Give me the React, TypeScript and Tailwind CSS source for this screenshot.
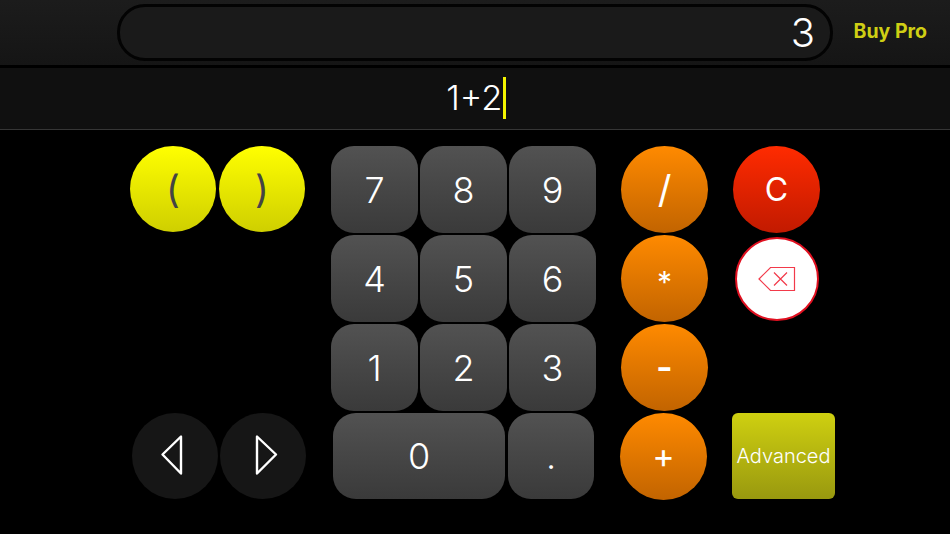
import React from "react";

const FONT = "font-['Inter','Liberation_Sans',sans-serif]";
const DIGIT = "flex items-center justify-center rounded-[23px] bg-gradient-to-b from-[#525252] to-[#3a3a3a] text-[36px] font-light text-white";
const ROUND = "flex items-center justify-center rounded-full";
const ORANGE = "h-[87px] w-[87px] bg-gradient-to-b from-[#ff8a00] to-[#c26400] text-white";
const YELLOW = "h-[86px] w-[86px] bg-gradient-to-b from-[#ffff00] to-[#cfcf00] text-[#444] text-[38px] font-normal";
const DARK = "h-[86px] w-[86px] bg-[#161616]";

function Triangle({ points }: { points: string }) {
    return (
        <svg width="40" height="44" viewBox="0 0 40 44" fill="none">
            <polygon points={points} stroke="#fff" strokeWidth="2.4" strokeLinejoin="round" />
        </svg>
    );
}

export default function App() {
    return (
        <div className={`${FONT} flex h-[534px] w-[950px] flex-col overflow-hidden bg-black`}>
            {/* top bar */}
            <div className="flex h-[65px] items-center bg-gradient-to-b from-[#1c1c1c] to-[#151515] pl-[117px] pr-[23px]">
                <div className="flex h-[57px] w-[716px] items-center justify-end rounded-[28px] border-[3px] border-[#030303] bg-[#1a1a1a] pr-[15px] text-[40px] font-light text-white">
                    3
                </div>
                <div className="ml-auto pb-[2px] text-[19.5px] font-bold text-[#cfcf14]">Buy Pro</div>
            </div>

            {/* input */}
            <div className="mt-[3px] flex h-[62px] items-center justify-center border-b border-[#363636] bg-[#101010] pl-[2px] text-[34.5px] font-light text-white">
                <span className="pb-[2px]">1+2</span>
                <span className="ml-[1px] mb-[2px] h-[42px] w-[2.5px] bg-[#f4f400]" />
            </div>

            {/* keypad */}
            <div className="mt-[16px] flex pl-[130px]">
                <div className="flex h-[353px] w-[201px] flex-col justify-between">
                    <div className="flex gap-[3px]">
                        <div className={`${ROUND} ${YELLOW}`}>(</div>
                        <div className={`${ROUND} ${YELLOW}`}>)</div>
                    </div>
                    <div className="ml-[2px] flex gap-[2px]">
                        <div className={`${ROUND} ${DARK}`}>
                            <Triangle points="7.5,20.5 26,2.5 26,39.5" />
                        </div>
                        <div className={`${ROUND} ${DARK}`}>
                            <Triangle points="14,2.5 14,39.5 33,20.5" />
                        </div>
                    </div>
                </div>

                <div className="flex w-[290px] flex-col gap-[2px]">
                    <div className="grid w-[265px] grid-cols-3 gap-[2px]">
                        {["7", "8", "9", "4", "5", "6", "1", "2", "3"].map((n) => (
                            <div key={n} className={`${DIGIT} h-[87px]`}>{n}</div>
                        ))}
                    </div>
                    <div className="ml-[2px] flex w-[261px] gap-[3px]">
                        <div className={`${DIGIT} h-[86px] flex-1`}>0</div>
                        <div className={`${DIGIT} h-[86px] w-[86px]`}>.</div>
                    </div>
                </div>

                <div className="flex w-[112px] flex-col gap-[2px]">
                    <div className={`${ROUND} ${ORANGE} text-[38px] font-normal`}>/</div>
                    <div className={`${ROUND} ${ORANGE} pt-[8px] text-[30px]`}>*</div>
                    <div className={`${ROUND} ${ORANGE} pb-[2px] text-[36px] font-semibold`}>-</div>
                    <div className={`${ROUND} ${ORANGE} -ml-px pb-[3px] text-[34px]`}>+</div>
                </div>

                <div className="flex h-[353px] flex-col justify-between">
                    <div className="flex flex-col gap-[4px]">
                        <div className={`${ROUND} h-[87px] w-[87px] bg-gradient-to-b from-[#ff2b00] to-[#c21a00] text-[32px] text-white`}>C</div>
                        <div className="ml-[2px] flex h-[84px] w-[84px] items-center justify-center rounded-full border-2 border-[#e01020] bg-white">
                            <svg width="38" height="26" viewBox="0 0 38 26" fill="none" stroke="#f23a4a" strokeWidth="1.2">
                                <polygon points="1,13 12.5,1.5 36.5,1.5 36.5,24.5 12.5,24.5" />
                                <path d="M16 6.5 L29 19.5 M29 6.5 L16 19.5" />
                            </svg>
                        </div>
                    </div>
                    <div className="-ml-px flex h-[86px] w-[103px] items-center justify-center rounded-[6px] bg-gradient-to-b from-[#cfd010] to-[#99990f] text-[20px] font-light text-white">
                        Advanced
                    </div>
                </div>
            </div>
        </div>
    );
}
